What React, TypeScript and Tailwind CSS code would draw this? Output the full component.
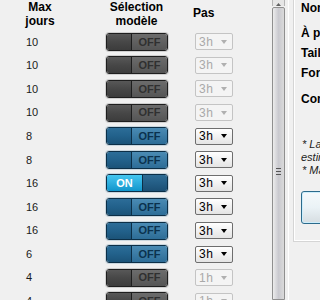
import React from "react";

type Mode = "disabled" | "off" | "on";

const rows: { max: number; mode: Mode; pas: string }[] = [
  { max: 10, mode: "disabled", pas: "3h" },
  { max: 10, mode: "disabled", pas: "3h" },
  { max: 10, mode: "disabled", pas: "3h" },
  { max: 10, mode: "disabled", pas: "3h" },
  { max: 8, mode: "off", pas: "3h" },
  { max: 8, mode: "off", pas: "3h" },
  { max: 16, mode: "on", pas: "3h" },
  { max: 16, mode: "off", pas: "3h" },
  { max: 16, mode: "off", pas: "3h" },
  { max: 6, mode: "off", pas: "3h" },
  { max: 4, mode: "disabled", pas: "1h" },
  { max: 4, mode: "disabled", pas: "1h" },
];

function Toggle({ mode }: { mode: Mode }) {
  if (mode === "on") {
    return (
      <div className="flex h-[18px] w-[62px] overflow-hidden rounded-[3px] border border-[#0c2f47] shadow-[0_0_0_1px_#c9d6de]">
        <div className="flex flex-1 items-center justify-center bg-gradient-to-b from-[#44c6f0] to-[#0f96cc] text-[11px] font-bold text-white">
          ON
        </div>
        <div className="w-[25px] border-l border-[#0c2f47] bg-gradient-to-b from-[#2f6c94] via-[#245e86] to-[#1b4f74]" />
      </div>
    );
  }
  const blue = mode === "off";
  return (
    <div
      className={
        blue
          ? "flex h-[18px] w-[62px] overflow-hidden rounded-[3px] border border-[#0c2f47] shadow-[0_0_0_1px_#c9d6de]"
          : "flex h-[18px] w-[62px] overflow-hidden rounded-[3px] border border-[#1e1e1e] shadow-[0_0_0_1px_#cfcfcf]"
      }
    >
      <div
        className={
          blue
            ? "w-[25px] border-r border-[#0c2f47] bg-gradient-to-b from-[#2c6d98] via-[#22618b] to-[#1b5378]"
            : "w-[25px] border-r border-[#1e1e1e] bg-gradient-to-b from-[#585858] via-[#474747] to-[#3c3c3c]"
        }
      />
      <div
        className={
          blue
            ? "flex flex-1 items-center justify-center bg-gradient-to-b from-[#4a8bb4] to-[#2d6d97] text-[11px] font-bold text-[#0b324e]"
            : "flex flex-1 items-center justify-center bg-gradient-to-b from-[#6c6c6c] to-[#555555] text-[11px] font-bold text-[#303030]"
        }
      >
        OFF
      </div>
    </div>
  );
}

function Select({ value, disabled }: { value: string; disabled: boolean }) {
  return (
    <div
      className={
        disabled
          ? "flex h-[17px] w-[38px] items-center justify-between rounded-[2px] border border-[#c4c4c4] bg-[#f4f4f4] pl-[3px] pr-[5px] text-[12px] tracking-[0.5px] text-[#a9a9a9]"
          : "flex h-[17px] w-[38px] items-center justify-between rounded-[2px] border border-[#6e6e6e] bg-gradient-to-b from-[#ffffff] to-[#e4e4e4] pl-[3px] pr-[5px] text-[12px] tracking-[0.5px] text-black"
      }
    >
      <span>{value}</span>
      <svg width="6" height="4" viewBox="0 0 6 4">
        <path d="M0 0h6L3 4z" fill={disabled ? "#b0b0b0" : "#000"} />
      </svg>
    </div>
  );
}

export default function App() {
  return (
    <div
      className="flex h-[300px] w-[320px] overflow-hidden bg-[#f0f0f0] text-black"
      style={{ fontFamily: '"Liberation Sans", Arial, sans-serif' }}
    >
      {/* grid */}
      <div className="w-[272px] shrink-0">
        <div className="flex h-[30px] text-[12px] font-bold leading-[14px]">
          <div className="w-[80px] text-center">
            Max
            <br />
            jours
          </div>
          <div className="w-[113px] text-center">
            Sélection
            <br />
            modèle
          </div>
          <div className="pt-[6px]">Pas</div>
        </div>
        {rows.map((r, i) => (
          <div key={i} className="flex h-[23.6px] items-center">
            <div className="w-[106px] pl-[26px] text-[11px] text-[#1a1a1a]">{r.max}</div>
            <Toggle mode={r.mode} />
            <div className="ml-[27px]">
              <Select value={r.pas} disabled={r.mode === "disabled"} />
            </div>
          </div>
        ))}
      </div>

      {/* scrollbar */}
      <div className="flex w-[13px] shrink-0 flex-col">
        <div className="flex h-[6px] items-end justify-center border-x border-[#b5b5b5] bg-[#e6e6e6]">
          <svg width="5" height="3" viewBox="0 0 5 3">
            <path d="M0 3L2.5 0L5 3z" fill="#606060" />
          </svg>
        </div>
        <div className="mt-[1px] flex flex-1 rounded-t-[2px] border border-[#8f8f8f] bg-gradient-to-r from-[#ececec] via-[#c9c9cf] to-[#dadada]">
          <div className="mt-[160px] flex h-[7px] w-full flex-col items-center justify-between">
            <div className="h-px w-[5px] bg-[#555]" />
            <div className="h-px w-[5px] bg-[#555]" />
            <div className="h-px w-[5px] bg-[#555]" />
          </div>
        </div>
      </div>

      <div className="ml-[3px] w-px shrink-0 bg-white" />

      {/* right panel */}
      <div className="ml-[4px] min-w-0 flex-1">
        <div className="h-[242px] border-b border-l border-[#d5d5d5] pl-[7px] shadow-[inset_1px_-1px_0_#ffffff]">
          <div className="whitespace-nowrap text-[12px] font-bold leading-[14px]">
            <div className="pt-[1px]">Nom du modèle</div>
            <div className="mt-[11px]">À partir de</div>
            <div className="mt-[6px]">Taille</div>
            <div className="mt-[6px]">Format</div>
            <div className="mt-[12px]">Commentaire</div>
          </div>
          <div className="mt-[32px] whitespace-nowrap text-[11px] italic leading-[13px] text-[#222]">
            <div className="pl-[1px]">* La durée est</div>
            <div>estimée</div>
            <div className="pl-[1px]">* Max</div>
          </div>
          <div className="mt-[14px] h-[33px] w-[40px] rounded-[3px] border border-[#2c6b8c] bg-gradient-to-b from-[#f5f9fb] via-[#eaf2f6] to-[#d6dde1] shadow-[inset_0_0_0_1px_#cdeefc]" />
        </div>
      </div>
    </div>
  );
}
